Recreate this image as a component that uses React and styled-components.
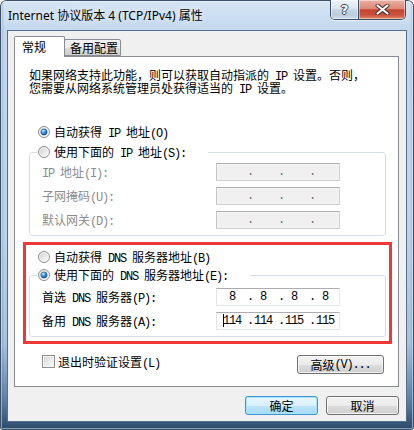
import React, { useId } from 'react';
import styled, { createGlobalStyle } from 'styled-components';

const GlobalStyle = createGlobalStyle`
  *, *::before, *::after { box-sizing: border-box; }
  html, body { margin: 0; padding: 0; }
  body {
    width: 414px;
    height: 430px;
    overflow: hidden;
    background: #ffffff;
    font-family: "Noto Sans CJK SC", "Noto Sans", sans-serif;
    font-size: 12px;
    color: #000;
  }
`;

const Lat = styled.span`
  font-family: "Liberation Mono", "Noto Sans CJK SC", monospace;
  letter-spacing: -1.2px;
  white-space: pre;
`;

function mix(str) {
  const parts = str.match(/[\x20-\x7e]+|[^\x20-\x7e]+/g) || [];
  return parts.map((p, i) =>
    /^[\x20-\x7e]+$/.test(p) ? <Lat key={i}>{p}</Lat> : <React.Fragment key={i}>{p}</React.Fragment>
  );
}

const Window = styled.div`
  width: 414px;
  height: 430px;
  display: flex;
  flex-direction: column;
  padding: 0 7px 8px;
  border-radius: 6px 6px 3px 3px;
  background:
    linear-gradient(90deg, rgba(40, 70, 105, 0.35) 0px, rgba(255, 255, 255, 0) 4px, rgba(255, 255, 255, 0) 410px, rgba(40, 70, 105, 0.25) 414px),
    linear-gradient(180deg, #d6e5f5 0px, #c3d8ee 30px, #bcd2e9 55%, #a7c1dc 80%, #5f80a6 93%, #2b4867 100%);
  box-shadow: inset 0 0 0 1px #3b516b, inset 0 0 0 2px rgba(255, 255, 255, 0.45);
`;

const TitleBar = styled.div`
  height: 30px;
  margin: 0 -7px;
  padding: 0 8px 0 8px;
  display: flex;
  align-items: flex-start;
`;

const Title = styled.div`
  align-self: center;
  flex: 1;
  padding-bottom: 1px;
  font-family: "Noto Sans", "Noto Sans CJK SC", sans-serif;
  font-size: 12px;
  color: #000;
  white-space: nowrap;
  text-shadow: 0 0 6px rgba(255, 255, 255, 0.9);
`;

const Caption = styled.div`
  display: flex;
  height: 20px;
  border: 1px solid #3d4f66;
  border-top: none;
  border-radius: 0 0 5px 5px;
  overflow: hidden;
  box-shadow: 0 1px 0 rgba(255, 255, 255, 0.55);
`;

const CapBtn = styled.div`
  width: ${(p) => p.$w}px;
  display: flex;
  align-items: center;
  justify-content: center;
  background: ${(p) =>
    p.$close
      ? 'linear-gradient(180deg, #eab1a3 0%, #dc8a77 45%, #c5442e 52%, #c9503a 78%, #e08a68 100%)'
      : 'linear-gradient(180deg, #f0f4f9 0%, #dde6f0 45%, #c6d4e3 52%, #bccdde 80%, #cfdceb 100%)'};
  box-shadow: inset 0 0 0 1px rgba(255, 255, 255, 0.45);
  & + & {
    border-left: 1px solid #3d4f66;
  }
`;

const HelpGlyph = styled.span`
  font-family: "DejaVu Sans", sans-serif;
  font-weight: bold;
  font-size: 13px;
  line-height: 1;
  color: #fff;
  text-shadow: 1px 0 0 #34465c, -1px 0 0 #34465c, 0 1px 0 #34465c, 0 -1px 0 #34465c;
  margin-top: -1px;
`;

const Client = styled.div`
  flex: 1;
  display: flex;
  flex-direction: column;
  background: #f0f0f0;
  border: 1px solid #56708c;
  padding: 5px 7px 6px 6px;
`;

const TabStrip = styled.div`
  height: 20px;
  display: flex;
  align-items: flex-end;
`;

const Tab = styled.div`
  position: relative;
  z-index: ${(p) => (p.$active ? 2 : 1)};
  height: ${(p) => (p.$active ? 21 : 17)}px;
  width: ${(p) => (p.$active ? 51 : 57)}px;
  margin-bottom: ${(p) => (p.$active ? -1 : 0)}px;
  margin-left: ${(p) => (p.$active ? 0 : -1)}px;
  padding: ${(p) => (p.$active ? '2px 0 0 7px' : '0 0 0 5px')};
  border: 1px solid #898c95;
  border-bottom: ${(p) => (p.$active ? 'none' : '1px solid #898c95')};
  border-radius: 2px 2px 0 0;
  background: ${(p) =>
    p.$active ? '#ffffff' : 'linear-gradient(180deg, #f2f2f2 0%, #ebebeb 50%, #dddddd 51%, #cfcfcf 100%)'};
  font-size: 12px;
  line-height: 16px;
  white-space: nowrap;
`;

const Panel = styled.div`
  height: 331px;
  background: #ffffff;
  border: 1px solid #898c95;
  padding: 11px 12px 0 14px;
  display: flex;
  flex-direction: column;
`;

const DescLine = styled.div`
  height: 13px;
  line-height: 13px;
  white-space: nowrap;
`;

const RadioRow = styled.div`
  height: ${(p) => p.$h}px;
  margin-top: ${(p) => p.$mt || 0}px;
  padding-left: 9px;
  display: flex;
  align-items: center;
  gap: 4px;
  white-space: nowrap;
`;

const Group = styled.div`
  margin-top: ${(p) => p.$mt}px;
  border: 1px solid #d5dfe5;
  border-radius: 3px;
  padding: 0 0 6px 12px;
  display: flex;
  flex-direction: column;
`;

const GroupHead = styled.div`
  align-self: flex-start;
  height: ${(p) => p.$h}px;
  margin: -${(p) => p.$up}px 0 ${(p) => p.$mb}px -5px;
  padding: 0 22px 0 1px;
  background: #ffffff;
  display: flex;
  align-items: center;
  gap: 4px;
  white-space: nowrap;
`;

const FormRows = styled.div`
  display: grid;
  grid-template-columns: 174px 124px;
  grid-auto-rows: 18px;
  row-gap: 6px;
  align-items: center;
`;

const FieldLabel = styled.div`
  white-space: nowrap;
  color: ${(p) => (p.$disabled ? '#8c8c8c' : '#000')};
`;

const Field = styled.div`
  height: 18px;
  display: flex;
  align-items: center;
  padding-left: 3px;
  border: 1px solid ${(p) => (p.$disabled ? '#d0d0d0' : '#e3e9ef')};
  border-top-color: ${(p) => (p.$disabled ? '#adadad' : '#abadb3')};
  border-left-color: ${(p) => (p.$disabled ? '#c4c4c4' : '#e2e3ea')};
  background: ${(p) => (p.$disabled ? '#f0f0f0' : '#ffffff')};
  box-shadow: ${(p) => (p.$disabled ? 'inset 0 0 0 1px #f4f4f4' : 'none')};
  font-family: "Liberation Mono", monospace;
  font-size: 12px;
  letter-spacing: -1.2px;
  color: ${(p) => (p.$disabled ? '#6d6d6d' : '#000')};
  white-space: pre;
`;

const Octet = styled.span`
  flex: none;
  width: 24px;
  text-align: center;
`;

const Dot = styled.span`
  flex: none;
  width: 7px;
  padding-left: 3px;
  overflow: visible;
`;

const Caret = styled.span`
  display: inline-block;
  width: 1px;
  height: 13px;
  margin-right: -1px;
  background: #000;
  vertical-align: middle;
`;

const DnsBox = styled.div`
  margin: 6px -6px 0;
  border: 3px solid #ef3838;
  padding: 3px 3px 4px;
  display: flex;
  flex-direction: column;
`;

const BottomRow = styled.div`
  margin-top: 11px;
  padding: 0 2px 0 13px;
  display: flex;
  align-items: flex-start;
`;

const CheckLabel = styled.div`
  height: 13px;
  display: flex;
  align-items: center;
  gap: 3px;
  white-space: nowrap;
`;

const CheckBox = styled.span`
  width: 13px;
  height: 13px;
  flex: none;
  border: 1px solid #8f8f8f;
  background: linear-gradient(135deg, #d2d2d2 0%, #ececec 55%, #fbfbfb 100%);
  box-shadow: inset 0 0 0 1px #f5f5f5;
`;

const Button = styled.div`
  width: ${(p) => p.$w}px;
  height: 19px;
  margin-left: ${(p) => (p.$push ? 'auto' : '0')};
  display: flex;
  align-items: center;
  justify-content: center;
  border: 1px solid ${(p) => (p.$default ? '#3c94cf' : '#707070')};
  border-radius: 3px;
  background: ${(p) =>
    p.$default
      ? 'linear-gradient(180deg, #eaf6fd 0%, #d9f0fc 50%, #bee6fd 51%, #a7d9f5 100%)'
      : 'linear-gradient(180deg, #f2f2f2 0%, #ebebeb 50%, #dddddd 51%, #cfcfcf 100%)'};
  box-shadow: inset 0 0 0 1px ${(p) => (p.$default ? 'rgba(160, 230, 255, 0.9)' : 'rgba(255, 255, 255, 0.7)')};
  white-space: nowrap;
`;

const ButtonRow = styled.div`
  margin-top: 9px;
  display: flex;
  justify-content: flex-end;
  gap: 8px;
`;

function Radio({ checked }) {
  const id = useId().replace(/[^a-zA-Z0-9]/g, '');
  return (
    <svg width="12" height="12" viewBox="0 0 12 12" style={{ flex: 'none' }}>
      <defs>
        <linearGradient id={`${id}b`} x1="0" y1="0" x2="1" y2="1">
          <stop offset="0" stopColor="#cfcfcf" />
          <stop offset="1" stopColor="#ffffff" />
        </linearGradient>
        <radialGradient id={`${id}d`} cx="0.35" cy="0.3" r="0.8">
          <stop offset="0" stopColor="#c4f2ff" />
          <stop offset="0.45" stopColor="#3a9be0" />
          <stop offset="1" stopColor="#0c4a8c" />
        </radialGradient>
      </defs>
      <circle cx="6" cy="6" r="5.5" fill={`url(#${id}b)`} stroke="#8c8c8c" />
      <circle cx="6" cy="6" r="4.4" fill="none" stroke="#f6f6f6" strokeWidth="0.8" />
      {checked && <circle cx="6" cy="6" r="3.1" fill={`url(#${id}d)`} stroke="#1c4c7e" strokeWidth="0.6" />}
    </svg>
  );
}

function IpField({ values, disabled, caret }) {
  return (
    <Field $disabled={disabled}>
      {[0, 1, 2, 3].map((i) => (
        <React.Fragment key={i}>
          <Octet>
            {caret && i === 0 && <Caret />}
            {values ? values[i] : ''}
          </Octet>
          {i < 3 && <Dot>.</Dot>}
        </React.Fragment>
      ))}
    </Field>
  );
}

function CloseGlyph() {
  return (
    <svg width="15" height="11" viewBox="0 0 15 11">
      <path d="M2.5 1.5 L12.5 9.5 M12.5 1.5 L2.5 9.5" stroke="#3a2a28" strokeWidth="4" strokeLinecap="round" fill="none" />
      <path d="M2.5 1.5 L12.5 9.5 M12.5 1.5 L2.5 9.5" stroke="#ffffff" strokeWidth="2.2" strokeLinecap="round" fill="none" />
    </svg>
  );
}

export default function App() {
  return (
    <>
      <GlobalStyle />
      <Window>
        <TitleBar>
          <Title>Internet 协议版本 4 (TCP/IPv4) 属性</Title>
          <Caption>
            <CapBtn $w={27}>
              <HelpGlyph>?</HelpGlyph>
            </CapBtn>
            <CapBtn $w={47} $close>
              <CloseGlyph />
            </CapBtn>
          </Caption>
        </TitleBar>
        <Client>
          <TabStrip>
            <Tab $active>常规</Tab>
            <Tab>备用配置</Tab>
          </TabStrip>
          <Panel>
            <DescLine>{mix('如果网络支持此功能，则可以获取自动指派的 IP 设置。否则，')}</DescLine>
            <DescLine>{mix('您需要从网络系统管理员处获得适当的 IP 设置。')}</DescLine>

            <RadioRow $h={20} $mt={28}>
              <Radio checked />
              <span>{mix('自动获得 IP 地址(O)')}</span>
            </RadioRow>

            <Group $mt={10}>
              <GroupHead $h={20} $up={11} $mb={1}>
                <Radio />
                <span>{mix('使用下面的 IP 地址(S):')}</span>
              </GroupHead>
              <FormRows>
                <FieldLabel $disabled>{mix('IP 地址(I):')}</FieldLabel>
                <IpField disabled />
                <FieldLabel $disabled>{mix('子网掩码(U):')}</FieldLabel>
                <IpField disabled />
                <FieldLabel $disabled>{mix('默认网关(D):')}</FieldLabel>
                <IpField disabled />
              </FormRows>
            </Group>

            <DnsBox>
              <RadioRow $h={18}>
                <Radio />
                <span>{mix('自动获得 DNS 服务器地址(B)')}</span>
              </RadioRow>
              <Group $mt={9}>
                <GroupHead $h={18} $up={10} $mb={4}>
                  <Radio checked />
                  <span>{mix('使用下面的 DNS 服务器地址(E):')}</span>
                </GroupHead>
                <FormRows>
                  <FieldLabel>{mix('首选 DNS 服务器(P):')}</FieldLabel>
                  <IpField values={['8', '8', '8', '8']} />
                  <FieldLabel>{mix('备用 DNS 服务器(A):')}</FieldLabel>
                  <IpField values={['114', '114', '115', '115']} caret />
                </FormRows>
              </Group>
            </DnsBox>

            <BottomRow>
              <CheckLabel>
                <CheckBox />
                <span>{mix('退出时验证设置(L)')}</span>
              </CheckLabel>
              <Button $w={87} $push>{mix('高级(V)...')}</Button>
            </BottomRow>
          </Panel>
          <ButtonRow>
            <Button $w={73} $default>确定</Button>
            <Button $w={73}>取消</Button>
          </ButtonRow>
        </Client>
      </Window>
    </>
  );
}
